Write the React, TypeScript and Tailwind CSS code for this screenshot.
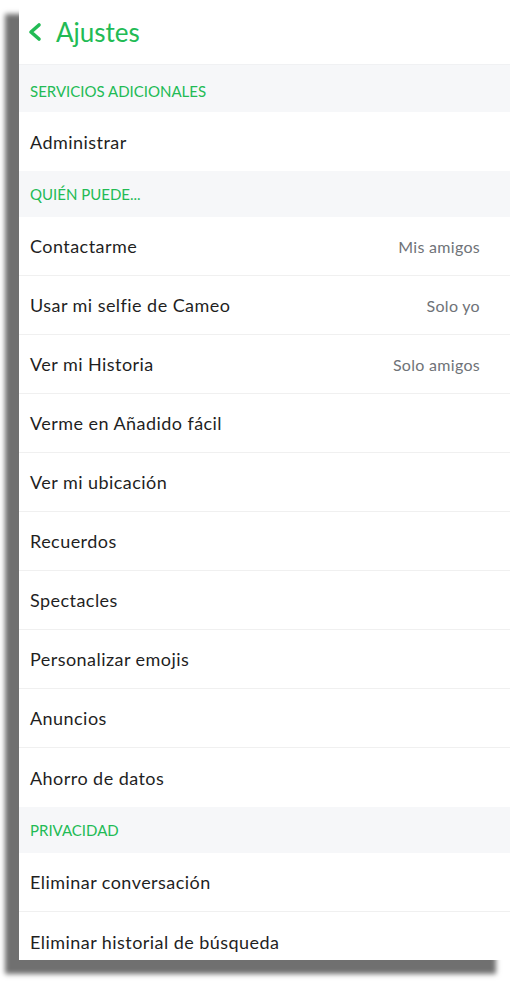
import React from "react";

type Row = { label: string; value?: string };

const sections: { title: string; rows: Row[] }[] = [
  { title: "SERVICIOS ADICIONALES", rows: [{ label: "Administrar" }] },
  {
    title: "QUIÉN PUEDE...",
    rows: [
      { label: "Contactarme", value: "Mis amigos" },
      { label: "Usar mi selfie de Cameo", value: "Solo yo" },
      { label: "Ver mi Historia", value: "Solo amigos" },
      { label: "Verme en Añadido fácil" },
      { label: "Ver mi ubicación" },
      { label: "Recuerdos" },
      { label: "Spectacles" },
      { label: "Personalizar emojis" },
      { label: "Anuncios" },
      { label: "Ahorro de datos" },
    ],
  },
  {
    title: "PRIVACIDAD",
    rows: [{ label: "Eliminar conversación" }, { label: "Eliminar historial de búsqueda" }],
  },
];

export default function App() {
  return (
    <div className="w-[513px] h-[982px] bg-white overflow-hidden font-['Lato','Noto_Sans',sans-serif]">
      <div className="ml-[19px] w-[491px] h-[960px] bg-white shadow-[-14px_14px_5px_#707070] overflow-hidden flex flex-col">
        {/* Header */}
        <div className="h-[65px] shrink-0 flex items-center pl-[8px] border-b border-[#f0f1f3]">
          <svg width="16" height="20" viewBox="0 0 16 20" className="mt-[-1px]">
            <polyline points="12,3 4,10 12,17" fill="none" stroke="#22bb55" strokeWidth="3.6" strokeLinecap="round" strokeLinejoin="round" />
          </svg>
          <span className="ml-[13px] text-[26px] leading-none text-[#22bb55] mt-[-1px]">Ajustes</span>
        </div>

        {sections.map((s, si) => (
          <div key={s.title}>
            <div
              className={`${si === 0 ? "h-[47px] pt-[5px]" : "h-[46px] pt-[1px]"} bg-[#f6f7f9] flex items-center pl-[11px] text-[15px] text-[#22bb55]`}
            >
              {s.title}
            </div>
            {s.rows.map((r, ri) => (
              <div
                key={r.label}
                className={`h-[59px] flex items-center justify-between pl-[11px] pr-[30px] pt-[1px] ${ri < s.rows.length - 1 ? "border-b border-[#f0f0f0]" : ""}`}
              >
                <span className="text-[18px] text-[#1f1f1f] tracking-[0.45px]">{r.label}</span>
                {r.value && <span className="text-[16px] text-[#6f7378] tracking-[0.3px]">{r.value}</span>}
              </div>
            ))}
          </div>
        ))}
      </div>
    </div>
  );
}
